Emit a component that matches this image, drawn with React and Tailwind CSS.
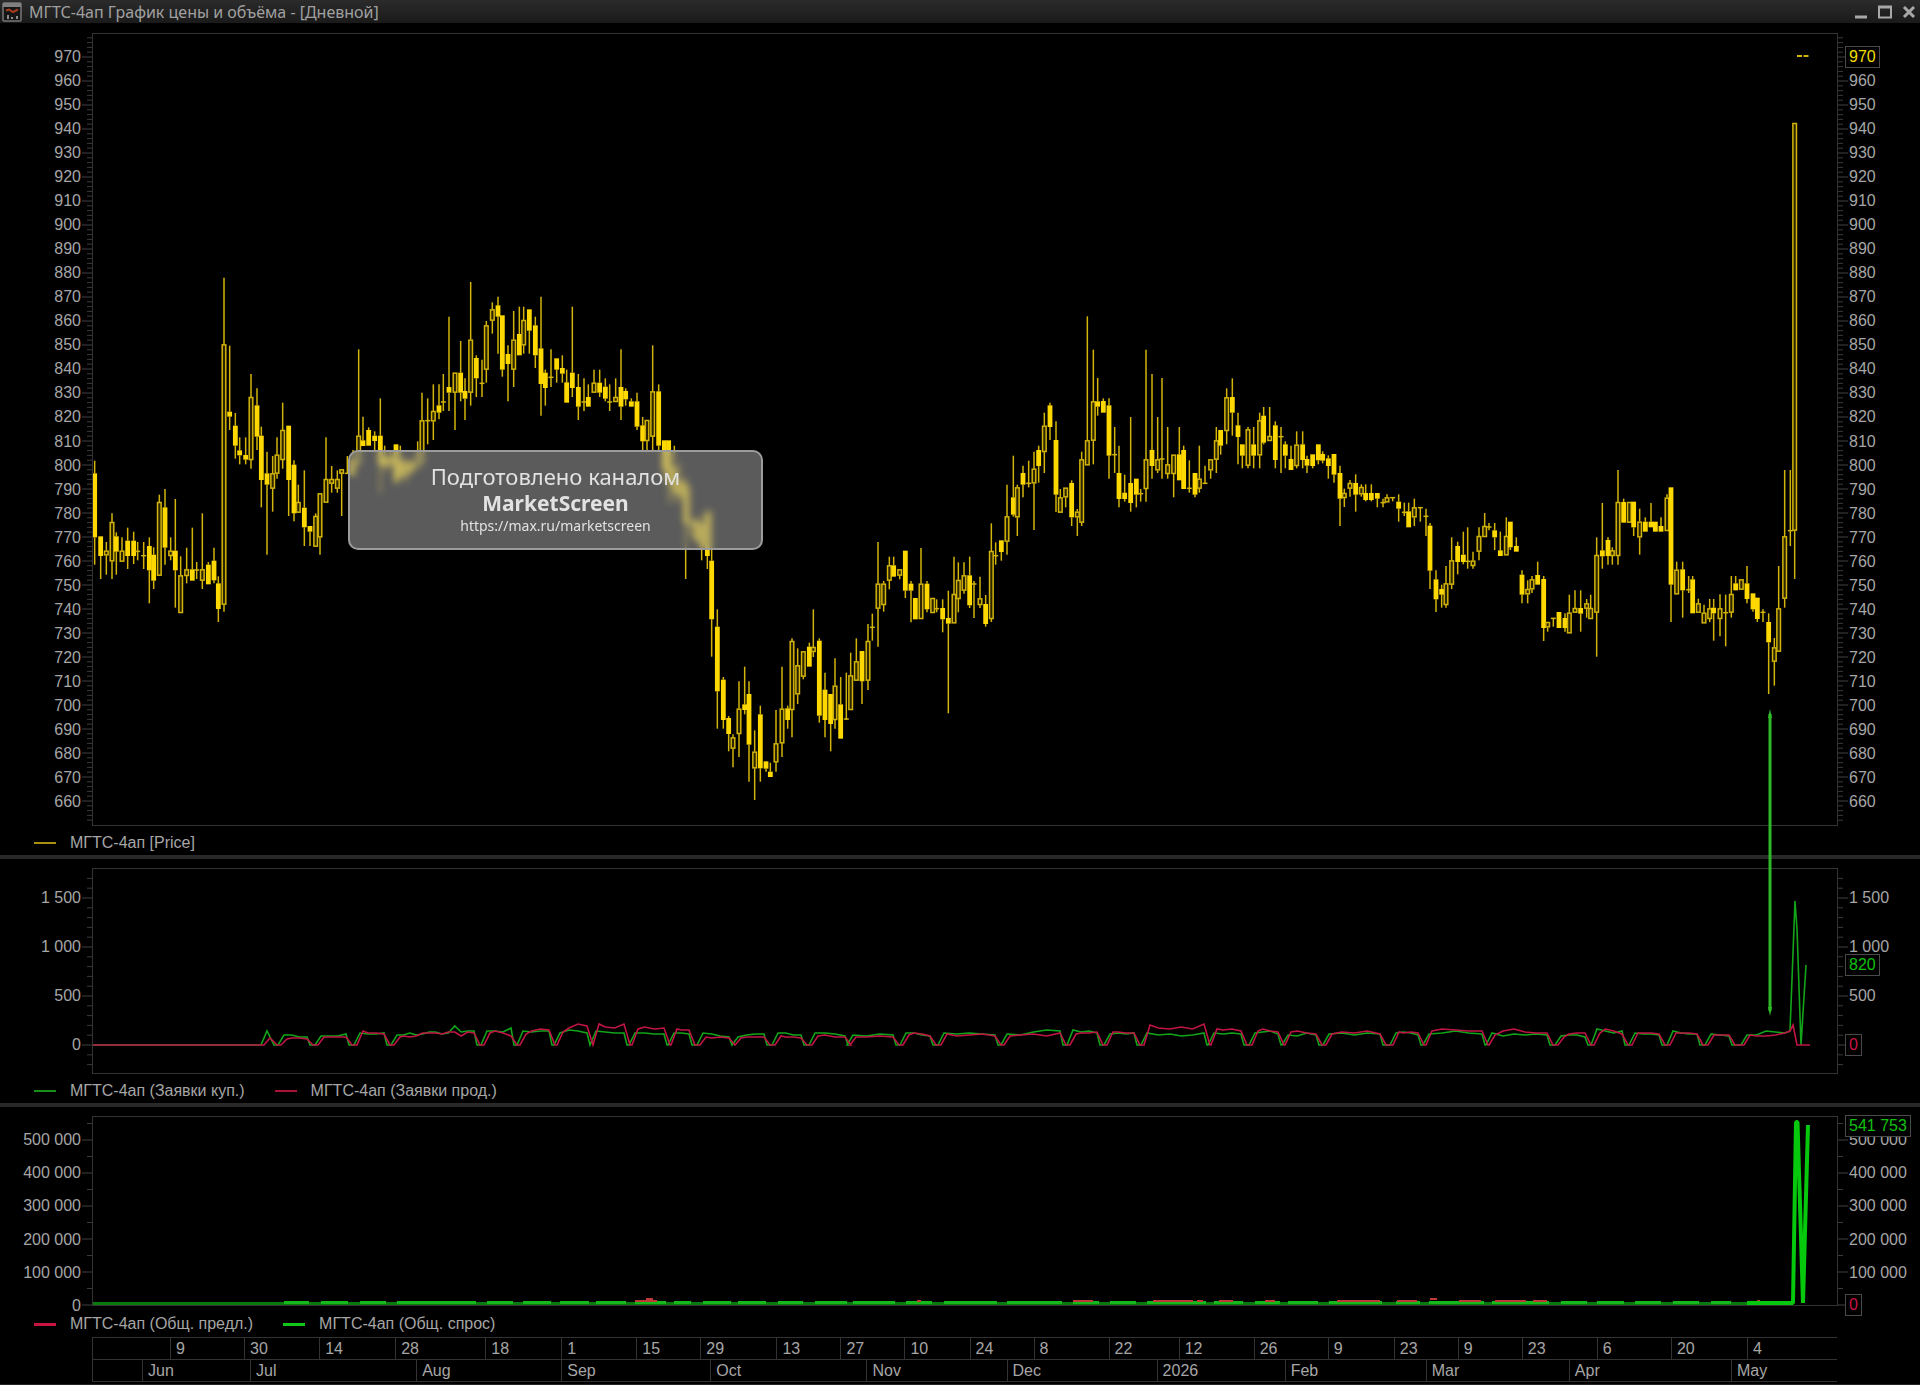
import React from 'react';

// Candle geometry: [x, high, bodyTop, bodyBottom, low, filled], three units per pixel from the block's origin
const candleBlocks = [
  {
    left: -13,
    top: 227,
    bars: [
      [44, 602, 640, 832, 914, 1], [62, 829, 829, 888, 957, 1], [79, 846, 872, 886, 944, 0], [96, 760, 786, 904, 957, 0],
      [109, 817, 829, 875, 944, 1], [126, 832, 872, 905, 905, 0], [143, 803, 842, 888, 927, 1], [161, 815, 842, 888, 912, 1],
      [173, 846, 874, 874, 901, 1], [191, 846, 887, 887, 927, 1], [208, 832, 858, 931, 1030, 1], [221, 862, 884, 962, 987, 1],
      [238, 704, 726, 947, 947, 0], [255, 687, 742, 863, 914, 1], [272, 832, 872, 888, 901, 0], [286, 717, 872, 931, 1043, 1],
      [302, 889, 946, 1059, 1059, 0], [320, 863, 928, 948, 970, 0], [337, 803, 928, 962, 962, 1], [350, 906, 930, 930, 957, 1],
      [367, 760, 928, 962, 987, 0], [385, 906, 914, 973, 973, 1], [402, 863, 902, 961, 970, 1], [415, 949, 970, 1047, 1086, 1],
      [432, 53, 253, 1034, 1055, 0], [449, 257, 455, 470, 510, 1], [466, 459, 497, 557, 596, 1], [479, 532, 571, 586, 613, 1],
      [497, 532, 585, 599, 613, 1], [513, 342, 411, 600, 626, 0], [531, 385, 436, 530, 570, 1], [544, 500, 527, 660, 742, 1],
      [561, 575, 640, 674, 884, 1], [578, 588, 640, 686, 755, 0], [591, 532, 584, 641, 656, 0], [608, 428, 510, 600, 626, 0],
      [626, 497, 497, 660, 768, 1], [642, 601, 614, 760, 784, 1], [655, 674, 726, 758, 758, 0], [673, 631, 743, 802, 858, 1],
      [690, 798, 798, 815, 858, 1], [707, 760, 768, 860, 860, 0], [720, 700, 700, 832, 884, 0], [738, 532, 657, 728, 728, 0],
      [755, 618, 657, 671, 698, 0], [772, 631, 657, 686, 698, 0], [785, 628, 628, 641, 768, 0], [802, 588, 640, 640, 641, 1],
      [819, 570, 600, 645, 650, 1], [836, 268, 527, 610, 620, 0], [849, 470, 541, 558, 558, 1], [866, 502, 510, 557, 557, 1],
      [884, 514, 527, 543, 573, 1], [901, 415, 527, 615, 700, 1], [914, 557, 590, 620, 640, 1], [931, 575, 590, 615, 630, 1],
      [948, 553, 553, 665, 675, 1], [961, 557, 600, 650, 665, 1], [978, 590, 605, 650, 670, 1], [995, 600, 605, 635, 645, 1],
      [1013, 544, 585, 620, 630, 0], [1026, 398, 481, 605, 615, 0], [1043, 415, 482, 482, 553, 1]
    ]
  },
  {
    left: 337,
    top: 227,
    bars: [
      [10, 373, 453, 484, 540, 0], [27, 373, 436, 458, 478, 1], [40, 342, 426, 426, 453, 1], [57, 170, 381, 398, 453, 1],
      [75, 338, 338, 398, 510, 0], [92, 243, 338, 398, 424, 1], [105, 355, 393, 416, 480, 1], [122, 66, 239, 398, 437, 0],
      [139, 286, 294, 355, 411, 1], [156, 299, 370, 370, 411, 1], [169, 183, 196, 329, 368, 0], [187, 127, 148, 182, 221, 0],
      [204, 110, 136, 170, 281, 1], [217, 166, 166, 329, 350, 1], [234, 256, 282, 312, 424, 1], [251, 153, 239, 329, 381, 0],
      [268, 140, 222, 286, 286, 1], [281, 140, 180, 256, 281, 0], [298, 148, 148, 212, 281, 1], [316, 170, 196, 286, 324, 1],
      [333, 110, 265, 372, 467, 1], [346, 329, 338, 384, 437, 1], [363, 268, 352, 352, 381, 1], [380, 295, 295, 329, 368, 1],
      [397, 286, 324, 341, 368, 1], [410, 329, 367, 428, 428, 1], [427, 140, 338, 384, 411, 1], [445, 342, 381, 440, 480, 1],
      [462, 355, 426, 426, 453, 1], [475, 373, 411, 440, 440, 1], [492, 329, 368, 398, 398, 0], [509, 329, 368, 398, 411, 1],
      [526, 355, 380, 416, 424, 1], [539, 373, 426, 426, 453, 1], [557, 355, 411, 426, 426, 0], [573, 268, 381, 440, 480, 1],
      [587, 385, 393, 418, 437, 1], [604, 415, 424, 440, 440, 1], [621, 398, 424, 500, 510, 1], [638, 471, 496, 544, 573, 1],
      [651, 480, 480, 543, 573, 0], [668, 256, 394, 530, 573, 0], [686, 373, 394, 557, 573, 1], [703, 541, 541, 630, 650, 1],
      [716, 541, 541, 670, 730, 1], [733, 557, 620, 700, 730, 1], [750, 610, 660, 710, 730, 1], [767, 650, 670, 790, 957, 1],
      [781, 680, 780, 800, 830, 0], [798, 770, 780, 840, 850, 1], [815, 760, 790, 860, 901, 1], [832, 745, 760, 888, 927, 1]
    ]
  },
  {
    left: 567,
    top: 487,
    bars: [
      [155, -30, 122, 298, 410, 1], [172, 268, 320, 514, 626, 1], [190, 471, 479, 600, 626, 1], [206, 588, 594, 642, 694, 1],
      [219, 643, 652, 686, 742, 0], [237, 484, 566, 642, 711, 0], [254, 440, 553, 570, 583, 1], [267, 484, 522, 674, 785, 1],
      [284, 631, 695, 745, 840, 0], [301, 557, 583, 745, 785, 1], [318, 724, 724, 746, 755, 1], [331, 728, 755, 771, 771, 1],
      [348, 570, 670, 727, 755, 0], [366, 440, 566, 670, 711, 0], [383, 557, 565, 600, 626, 1], [396, 355, 363, 570, 652, 0],
      [413, 385, 436, 523, 552, 0], [430, 394, 394, 470, 478, 0], [448, 368, 380, 440, 440, 1], [460, 268, 381, 396, 411, 0],
      [478, 355, 362, 587, 608, 1], [495, 458, 509, 600, 652, 1], [512, 522, 522, 612, 694, 1], [525, 415, 497, 600, 626, 0],
      [542, 471, 553, 656, 656, 1], [559, 458, 597, 597, 600, 1], [572, 398, 466, 570, 570, 0], [589, 355, 424, 482, 482, 0],
      [606, 393, 393, 484, 552, 1], [624, 312, 363, 482, 510, 0], [637, 281, 322, 322, 362, 1], [654, 66, 191, 266, 380, 0],
      [671, 183, 191, 255, 275, 0], [688, 110, 136, 182, 208, 0], [701, 110, 136, 170, 170, 1], [719, 148, 148, 167, 178, 0],
      [736, 92, 92, 212, 234, 1], [753, 183, 191, 212, 307, 1], [766, 234, 234, 298, 298, 1], [783, 84, 191, 297, 297, 0],
      [801, 183, 191, 268, 277, 1], [818, 234, 234, 279, 279, 0], [830, 238, 266, 266, 277, 1], [848, 238, 264, 298, 337, 1],
      [865, 212, 294, 311, 580, 1], [882, 110, 222, 310, 310, 0], [895, 127, 180, 237, 277, 0], [912, 127, 166, 212, 221, 0],
      [929, 110, 166, 256, 264, 1], [942, 183, 192, 192, 294, 1], [960, 170, 235, 255, 264, 0], [977, 225, 252, 312, 320, 1]
    ]
  },
  {
    left: 867,
    top: 257,
    bars: [
      [94, 700, 783, 987, 996, 0], [107, 757, 797, 797, 824, 1], [124, 751, 751, 786, 812, 1], [141, 584, 679, 755, 794, 0],
      [160, 497, 622, 674, 680, 1], [172, 584, 592, 682, 738, 0], [189, 527, 549, 584, 622, 1], [206, 512, 580, 580, 592, 1],
      [222, 485, 536, 580, 720, 0], [236, 467, 480, 528, 578, 1], [253, 368, 407, 486, 549, 0], [270, 338, 346, 411, 450, 1],
      [288, 394, 450, 614, 666, 1], [301, 597, 622, 668, 668, 0], [317, 593, 593, 622, 652, 0], [335, 571, 579, 682, 708, 1],
      [352, 657, 665, 682, 738, 0], [365, 485, 508, 698, 708, 0], [382, 79, 451, 526, 526, 0], [400, 179, 334, 452, 523, 0],
      [413, 264, 334, 350, 377, 1], [430, 325, 333, 368, 368, 1], [447, 325, 346, 497, 566, 1], [464, 411, 494, 494, 549, 1],
      [477, 467, 549, 627, 652, 1], [494, 554, 608, 627, 635, 1], [512, 381, 579, 639, 665, 1], [529, 566, 566, 614, 652, 1],
      [542, 597, 611, 611, 635, 1], [558, 179, 508, 597, 635, 0], [576, 252, 480, 528, 566, 1], [593, 381, 508, 541, 549, 0],
      [606, 264, 507, 507, 566, 1], [623, 411, 523, 552, 566, 0], [641, 494, 494, 552, 622, 0], [658, 411, 493, 571, 571, 1],
      [671, 467, 480, 597, 597, 1], [688, 511, 595, 595, 608, 1], [705, 549, 549, 614, 622, 1], [718, 467, 566, 596, 608, 0],
      [735, 527, 580, 580, 582, 1], [752, 508, 508, 541, 566, 0], [769, 411, 451, 509, 549, 0], [782, 420, 420, 467, 494, 1],
      [800, 295, 322, 423, 463, 0], [817, 265, 321, 368, 437, 1], [834, 368, 406, 441, 523, 1], [847, 463, 463, 497, 535, 1],
      [864, 411, 418, 527, 535, 0], [881, 411, 463, 497, 535, 1], [899, 368, 391, 496, 535, 0], [911, 351, 377, 458, 463, 1],
      [929, 351, 438, 453, 453, 0], [946, 394, 406, 510, 535, 1], [963, 411, 440, 440, 549, 1], [976, 454, 463, 497, 535, 1],
      [993, 467, 507, 540, 540, 1], [1010, 424, 464, 528, 535, 0], [1028, 424, 463, 510, 535, 1], [1041, 497, 507, 527, 549, 1],
      [1058, 493, 493, 528, 535, 1], [1075, 463, 463, 511, 523, 1]
    ]
  },
  {
    left: 1207,
    top: 347,
    bars: [
      [68, 214, 222, 242, 250, 1], [85, 226, 235, 258, 296, 1], [102, 222, 222, 284, 308, 1], [120, 257, 279, 356, 438, 1],
      [133, 326, 339, 354, 381, 0], [150, 300, 309, 326, 350, 0], [167, 283, 309, 344, 395, 1], [184, 313, 321, 343, 350, 0],
      [197, 313, 339, 360, 364, 1], [214, 313, 339, 360, 364, 1], [232, 339, 339, 356, 382, 1], [249, 356, 368, 368, 382, 1],
      [261, 343, 352, 367, 367, 0], [278, 352, 353, 353, 364, 1], [296, 343, 365, 386, 425, 1], [313, 368, 397, 397, 408, 1],
      [326, 368, 394, 442, 442, 1], [343, 356, 382, 412, 438, 0], [361, 382, 383, 383, 425, 1], [378, 386, 409, 409, 468, 1],
      [390, 429, 437, 572, 627, 1], [408, 571, 598, 658, 696, 1], [425, 614, 627, 644, 683, 1], [438, 558, 610, 675, 683, 0],
      [455, 472, 541, 614, 627, 0], [473, 485, 498, 546, 583, 1], [490, 455, 524, 546, 553, 1], [503, 442, 544, 544, 566, 1],
      [519, 515, 542, 558, 566, 0], [537, 442, 468, 515, 541, 0], [554, 399, 438, 471, 471, 0], [567, 429, 441, 441, 451, 1],
      [584, 429, 451, 472, 510, 1], [601, 455, 511, 528, 528, 1], [619, 412, 468, 526, 526, 0], [631, 425, 425, 502, 510, 1],
      [649, 472, 498, 515, 515, 1], [666, 571, 584, 644, 670, 1], [683, 601, 627, 643, 670, 0], [696, 588, 598, 628, 639, 0],
      [713, 545, 585, 614, 614, 1], [731, 588, 597, 744, 783, 1], [743, 726, 726, 742, 755, 0], [760, 714, 715, 715, 740, 1],
      [777, 696, 696, 744, 744, 1], [795, 700, 714, 744, 755, 1], [808, 644, 698, 760, 760, 0], [825, 631, 684, 698, 698, 0],
      [842, 631, 684, 701, 755, 1], [860, 657, 670, 686, 713, 0], [872, 644, 684, 717, 717, 0]
    ]
  },
  {
    left: 1467,
    top: 387,
    bars: [
      [110, 352, 405, 578, 710, 0], [127, 249, 391, 409, 446, 1], [144, 352, 360, 408, 434, 1], [157, 382, 391, 408, 434, 0],
      [174, 150, 246, 408, 434, 0], [191, 236, 246, 308, 308, 1], [208, 246, 246, 308, 308, 0], [221, 245, 245, 322, 348, 1],
      [239, 266, 305, 352, 404, 0], [256, 292, 305, 335, 335, 1], [273, 249, 305, 322, 322, 1], [286, 305, 305, 335, 335, 1],
      [303, 292, 318, 335, 335, 1], [321, 223, 233, 333, 333, 0], [333, 202, 202, 494, 606, 1], [350, 425, 449, 523, 523, 0],
      [368, 425, 448, 511, 593, 1], [386, 468, 509, 509, 519, 1], [398, 468, 478, 580, 580, 1], [415, 536, 550, 578, 578, 0],
      [432, 554, 578, 610, 610, 0], [449, 537, 565, 597, 606, 0], [461, 537, 563, 580, 662, 1], [480, 523, 565, 597, 649, 0],
      [497, 524, 578, 578, 679, 1], [514, 468, 522, 578, 593, 0], [527, 468, 490, 511, 511, 1], [544, 478, 478, 509, 509, 0],
      [561, 438, 490, 537, 550, 1], [579, 520, 520, 568, 575, 1], [592, 533, 533, 597, 606, 1], [609, 568, 577, 577, 606, 1],
      [626, 580, 606, 667, 822, 1], [643, 654, 682, 725, 797, 0], [656, 438, 565, 695, 695, 0], [674, 150, 349, 536, 563, 0],
      [691, 150, 332, 332, 378, 1], [704, -891, -891, 332, 477, 0]
    ]
  }
];

// Trading spans along the x axis: [from, to, buy order heights, sell order heights]
const spans = [
  [174, 178, [14], [7]],
  [191, 214, [10, 10, 8, 8], [6, 7, 7, 6]],
  [228, 253, [9, 9, 9, 11], [8, 8, 8, 8]],
  [267, 291, [12, 11, 11, 12], [14, 12, 12, 11]],
  [304, 381, [10, 10, 12, 10, 11, 13, 13, 11, 12, 19, 13, 14, 14], [8, 9, 8, 9, 12, 12, 12, 11, 13, 13, 9, 13, 12]],
  [394, 418, [14, 14, 13, 17], [12, 14, 12, 9]],
  [430, 456, [14, 13, 14, 14], [11, 14, 16, 15]],
  [467, 494, [12, 15, 14, 12], [13, 17, 21, 19]],
  [503, 531, [14, 13, 12, 12], [21, 18, 17, 21]],
  [542, 571, [12, 12, 11, 11], [16, 18, 16, 17]],
  [581, 596, [12, 12, 11], [16, 15, 15]],
  [610, 636, [12, 11, 9, 8], [8, 7, 8, 7]],
  [645, 671, [8, 10, 11, 11], [7, 8, 8, 8]],
  [685, 708, [12, 12, 10, 10], [9, 8, 8, 7]],
  [722, 752, [12, 12, 11, 9], [9, 10, 8, 8]],
  [760, 800, [10, 9, 11, 10], [8, 8, 9, 8]],
  [813, 837, [12, 12, 10, 9], [10, 12, 11, 9]],
  [851, 902, [12, 11, 12, 11, 10], [11, 9, 10, 11, 9]],
  [914, 967, [11, 10, 13, 15, 14], [9, 10, 11, 9, 12]],
  [980, 1004, [15, 13, 14, 12], [11, 12, 12, 13]],
  [1017, 1041, [11, 12, 11, 12], [13, 13, 12, 12]],
  [1054, 1111, [12, 10, 11, 9, 10, 12], [20, 17, 16, 18, 16, 21]],
  [1121, 1148, [12, 11, 12, 11], [16, 15, 16, 14]],
  [1162, 1185, [12, 13, 14, 11], [14, 16, 14, 13]],
  [1195, 1223, [10, 9, 12, 10], [13, 14, 12, 11]],
  [1236, 1287, [11, 12, 10, 12, 11], [11, 13, 12, 14, 11]],
  [1303, 1325, [12, 13, 12, 10], [13, 12, 13, 12]],
  [1336, 1389, [11, 12, 14, 12, 11], [14, 16, 15, 14, 14]],
  [1399, 1454, [12, 9, 11, 10, 11, 10], [10, 14, 16, 13, 12, 12]],
  [1468, 1492, [9, 10, 10, 8], [8, 11, 12, 12]],
  [1504, 1529, [16, 14, 12, 14], [12, 16, 14, 11]],
  [1542, 1566, [12, 11, 11, 10], [12, 12, 12, 11]],
  [1580, 1604, [14, 12, 11, 11], [12, 12, 12, 11]],
  [1618, 1636, [11, 10, 9], [10, 10, 10]],
  [1654, 1692, [10, 10, 14, 13, 12], [10, 9, 9, 10, 12]]
];

// Parts where the total offer rises above the demand line: [from, to, y]
const offerCaps = [
  [542, 564, 185], [553, 560, 183], [824, 828, 185], [980, 1000, 185], [1060, 1100, 185], [1104, 1110, 185],
  [1126, 1140, 185], [1172, 1182, 185], [1244, 1287, 185], [1304, 1324, 185], [1337, 1344, 183], [1366, 1388, 185],
  [1402, 1433, 185], [1440, 1454, 185], [1664, 1667, 185]
];

const ordersLine = (key, lag, tail) => {
  const zero = 177;
  const points = [[0, zero]];
  spans.forEach((span) => {
    const [from, to] = span;
    const heights = span[key];
    points.push([from - 6 + lag, zero]);
    heights.forEach((h, i) => {
      const step = heights.length > 1 ? (to - from) / (heights.length - 1) : 0;
      points.push([from + i * step + (i === 0 ? lag : 0), zero - h]);
    });
    if (to < 1690) points.push([to + 3 + lag, zero]);
  });
  return [...points, ...tail].map((p) => p.join(',')).join(' ');
};

const priceLabels = Array.from({ length: 32 }, (_, i) => 970 - i * 10);
const orderLabels = ['1 500', '1 000', '500', '0'];
const totalLabels = ['500 000', '400 000', '300 000', '200 000', '100 000', '0'];

const makeTicks = (zero, step, every, min, max) => {
  const ticks = [];
  for (let i = -60; i < 200; i++) {
    const y = zero + i * step;
    if (y > min && y < max) ticks.push({ y, major: i % every === 0 });
  }
  return ticks;
};

const priceTicks = makeTicks(24, 4.8, 5, 3, 788);
const orderTicks = makeTicks(177, 9.8, 5, 1, 201);
const totalTicks = makeTicks(189, 16.5, 2, 3, 190);

const days = [
  ['', 93], ['9', 171], ['30', 245], ['14', 320], ['28', 396], ['18', 486], ['1', 562], ['15', 637], ['29', 701],
  ['13', 777], ['27', 841], ['10', 905], ['24', 970], ['8', 1034], ['22', 1109], ['12', 1179], ['26', 1254],
  ['9', 1328], ['23', 1394], ['9', 1458], ['23', 1522], ['6', 1597], ['20', 1671], ['4', 1747]
];
const months = [
  ['', 93], ['Jun', 143], ['Jul', 251], ['Aug', 417], ['Sep', 562], ['Oct', 711], ['Nov', 867], ['Dec', 1007],
  ['2026', 1157], ['Feb', 1285], ['Mar', 1426], ['Apr', 1569], ['May', 1731]
];

const Ticks = ({ ticks, side }) => (
  <svg className="w-[10px] h-full shrink-0 overflow-visible" aria-hidden="true">
    {ticks.map(({ y, major }) => {
      const length = major ? 10 : 5;
      return (
        <line
          key={y}
          x1={side === 'left' ? 10 - length : 0}
          x2={side === 'left' ? 10 : length}
          y1={y}
          y2={y}
          stroke={major ? '#404040' : '#3a3a3a'}
        />
      );
    })}
  </svg>
);

const Axis = ({ labels, ticks, side, padding, children }) => (
  <div className={`relative flex shrink-0 ${side === 'left' ? 'w-[92px]' : 'w-[82px]'}`}>
    {side === 'right' && <Ticks ticks={ticks} side={side} />}
    <div className={`flex flex-1 flex-col justify-between whitespace-nowrap ${padding} ${side === 'left' ? 'items-end pr-px' : 'items-start pl-px'}`}>
      {labels.map((label) => (
        <span key={label} className="leading-6">{label}</span>
      ))}
    </div>
    {side === 'left' && <Ticks ticks={ticks} side={side} />}
    {children}
  </div>
);

const Badge = ({ className, children }) => (
  <span className={`absolute left-[7px] border border-[#4a4a4a] bg-black px-[3px] leading-5 whitespace-nowrap ${className}`}>{children}</span>
);

const Legend = ({ items, className }) => (
  <ul className={`flex gap-[30px] pl-[34px] ${className}`}>
    {items.map((item) => (
      <li key={item.label} className="flex items-center gap-[14px] leading-6">
        <span className={`w-[22px] ${item.line}`} />
        {item.label}
      </li>
    ))}
  </ul>
);

const Candle = ({ x, high, top, bottom, low, filled }) => (
  <g>
    {high < top && <line x1={x} x2={x} y1={high} y2={top} />}
    {low > bottom && <line x1={x} x2={x} y1={bottom} y2={low} />}
    {top === bottom ? (
      <line x1={x - 2.5} x2={x + 2.5} y1={top} y2={top} />
    ) : filled ? (
      <rect x={x - 2.4} y={top} width={4.8} height={bottom - top} fill="#ffd800" stroke="none" />
    ) : (
      <rect x={x - 1.8} y={top + 0.5} width={3.6} height={Math.max(bottom - top - 1, 1)} fill="#2c2500" />
    )}
  </g>
);

const Timeline = ({ cells }) => (
  <div className="flex border-t border-[#333333]">
    {cells.map(([label, start], i) => {
      const end = i + 1 < cells.length ? cells[i + 1][1] : 1837;
      return (
        <div key={start} className="h-[21px] min-w-0 basis-0" style={{ flexGrow: end - start }}>
          <div className="h-full border-l border-[#333333] pl-[5px] leading-[21px]">{label}</div>
        </div>
      );
    })}
  </div>
);

const App = () => {
  return (
    <main className="relative min-h-[1385px] min-w-[960px] overflow-hidden bg-black font-['Liberation_Sans',Arial,sans-serif] text-[16px] text-[#a6a6a6]">
      <header className="flex h-[23px] items-center justify-between bg-linear-to-b from-[#2b2b2b] to-[#1a1a1a] pl-[2px] pr-[3px]">
        <div className="flex items-center gap-[7px]">
          <svg className="h-5 w-5" viewBox="0 0 20 20" aria-hidden="true">
            <rect x="1" y="1" width="18" height="18" rx="1" fill="#161616" stroke="#777777" strokeWidth="1.5" />
            <path d="M1 3h18" stroke="#808080" strokeWidth="4" />
            <path d="M4 8.500l3-1 4 2.500 5-2.500" fill="none" stroke="#a83c1c" strokeWidth="2" />
            <path d="M6 13v4M10 15v2M15 14v3" stroke="#8c8c8c" strokeWidth="2" />
          </svg>
          <h1 className="font-['Noto_Sans','Open_Sans',sans-serif] text-[16px] leading-5 text-[#a0a0a0]">
            МГТС-4ап График цены и объёма - [Дневной]
          </h1>
        </div>
        <div className="flex items-center gap-2 text-[#a8a8a8]">
          <button type="button" aria-label="Minimize">
            <svg className="h-4 w-4" viewBox="0 0 16 16">
              <path d="M2 13h12" stroke="currentColor" strokeWidth="3" />
            </svg>
          </button>
          <button type="button" aria-label="Maximize">
            <svg className="h-4 w-4" viewBox="0 0 16 16">
              <path d="M2 2.500h12v11H2z M2 3.500h12" fill="none" stroke="currentColor" strokeWidth="2" />
            </svg>
          </button>
          <button type="button" aria-label="Close">
            <svg className="h-4 w-4" viewBox="0 0 16 16">
              <path d="M3 3l10 10M13 3L3 13" stroke="currentColor" strokeWidth="3" />
            </svg>
          </button>
        </div>
      </header>

      {/* Price */}
      <section className="pt-[10px]">
        <div className="flex h-[793px]">
          <Axis labels={priceLabels} ticks={priceTicks} side="left" padding="py-3" />
          <svg className="h-full min-w-0 flex-1 border border-[#333333]" viewBox="0 1 1744 791" preserveAspectRatio="none" role="img" aria-label="Price">
            <g stroke="#d2b40a" strokeWidth="1.5" fill="none">
              {candleBlocks.map((block) =>
                block.bars.map(([x, high, top, bottom, low, filled]) => (
                  <Candle
                    key={block.left + x / 3}
                    x={block.left + x / 3}
                    high={block.top + high / 3}
                    top={block.top + top / 3}
                    bottom={block.top + bottom / 3}
                    low={block.top + low / 3}
                    filled={filled}
                  />
                ))
              )}
              <path d="M1704 23h5M1710.500 23h5" strokeWidth="2" />
            </g>
          </svg>
          <Axis labels={priceLabels} ticks={priceTicks} side="right" padding="py-3">
            <Badge className="top-[13px] text-[#f0dc00]">970</Badge>
          </Axis>
        </div>
        <Legend className="pt-[5px]" items={[{ label: 'МГТС-4ап [Price]', line: 'h-0.5 bg-[#a8900c]' }]} />
      </section>

      <div className="h-1 bg-[#292929]" />

      {/* Orders */}
      <section className="pt-[9px]">
        <div className="flex h-[206px]">
          <Axis labels={orderLabels} ticks={orderTicks} side="left" padding="pt-[18px] pb-[17px]" />
          <svg className="h-full min-w-0 flex-1 border border-[#333333]" viewBox="0 1 1744 204" preserveAspectRatio="none" role="img" aria-label="Orders">
            <g fill="none" strokeWidth="1.6">
              <polyline points={ordersLine(2, 0, [[1697, 163], [1702, 33], [1704, 61], [1708, 177], [1713, 97]])} stroke="#12a51a" />
              <polyline points={ordersLine(3, 3, [[1697, 163], [1700, 157], [1704, 177], [1717, 177]])} stroke="#c01545" />
            </g>
          </svg>
          <Axis labels={orderLabels} ticks={orderTicks} side="right" padding="pt-[18px] pb-[17px]">
            <Badge className="top-[86px] text-[#10c010]">820</Badge>
            <Badge className="top-[166px] text-[#c81446]">0</Badge>
          </Axis>
        </div>
        <Legend
          className="pt-[5px]"
          items={[
            { label: 'МГТС-4ап (Заявки куп.)', line: 'h-0.5 bg-[#189018]' },
            { label: 'МГТС-4ап (Заявки прод.)', line: 'h-0.5 bg-[#a81238]' }
          ]}
        />
      </section>

      <div className="h-1 bg-[#292929]" />

      {/* Totals */}
      <section className="pt-[9px]">
        <div className="flex h-[190px]">
          <Axis labels={totalLabels} ticks={totalTicks} side="left" padding="pt-3 -mb-3" />
          <svg className="h-full min-w-0 flex-1 border border-[#333333]" viewBox="0 1 1744 188" preserveAspectRatio="none" role="img" aria-label="Totals">
            <g fill="none">
              <path d="M0 187.500H1700" stroke="#0a7a0e" strokeWidth="3" />
              {spans.slice(1).map(([from, to]) => (
                <path key={from} d={`M${from} 186.500H${to + 2}`} stroke="#16b81c" strokeWidth="3" />
              ))}
              {offerCaps.map(([from, to, y]) => (
                <path key={`${from}-${y}`} d={`M${from} ${y}H${to}`} stroke="#c03a3a" strokeWidth="2" />
              ))}
              <path d="M1654 187H1700L1703 6H1704.500L1710 187L1715 9" stroke="#06c80c" strokeWidth="4" strokeLinejoin="bevel" />
            </g>
          </svg>
          <Axis labels={totalLabels} ticks={totalTicks} side="right" padding="pt-3 -mb-3">
            <Badge className="-top-px text-[#10c010]">541 753</Badge>
            <Badge className="top-[178px] text-[#c81446]">0</Badge>
          </Axis>
        </div>
        <Legend
          className="pt-[6px] pb-px"
          items={[
            { label: 'МГТС-4ап (Общ. предл.)', line: 'h-[3px] bg-[#c81440]' },
            { label: 'МГТС-4ап (Общ. спрос)', line: 'h-[3px] bg-[#10c818]' }
          ]}
        />
        <div className="ml-[92px] mr-[83px] border-b border-[#333333]">
          <Timeline cells={days} />
          <Timeline cells={months} />
        </div>
      </section>
      <div className="mt-[2px] h-[2px] bg-[#242424]" />

      {/* Marker across the price and order panels */}
      <svg className="absolute left-[92.200%] top-[709px] -translate-x-1/2 w-2 h-[307px]" viewBox="0 0 8 307" aria-hidden="true">
        <path d="M4 0l2 9H2z M4 307l2-9H2z" fill="#2fb828" />
        <path d="M4 5v297" stroke="#2fb828" strokeWidth="3" />
      </svg>

      <div className="absolute left-[348px] top-[450px] flex h-[100px] w-[415px] flex-col items-center rounded-[10px] border-2 border-[#9c9c9c] bg-[#a0a0a0]/57 pt-[10px] font-['Noto_Sans','Open_Sans',sans-serif] text-[#e2e2e2] backdrop-blur-[3px]">
        <p className="text-[22px] leading-7">Подготовлено каналом</p>
        <p className="text-[21px] font-bold leading-[26px]">MarketScreen</p>
        <a href="https://max.ru/marketscreen" className="text-[14px] leading-5">https://max.ru/marketscreen</a>
      </div>
    </main>
  );
};

export default App;
